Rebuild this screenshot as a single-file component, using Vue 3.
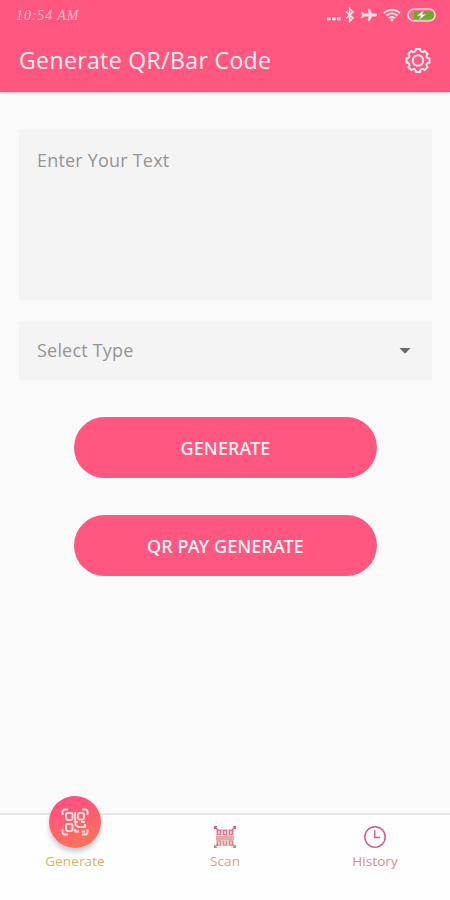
<script setup>
// Eight-toothed cog outline, centred on the origin
const point = (radius, degrees) => {
  const a = (degrees * Math.PI) / 180
  return `${(radius * Math.cos(a)).toFixed(2)} ${(radius * Math.sin(a)).toFixed(2)}`
}
const gearPath =
  Array.from({ length: 8 }, (_, i) => {
    const a = i * 45
    return `${i ? 'L' : 'M'}${point(11.7, a - 11)} L${point(11.7, a + 11)} Q${point(10, a + 12)} ${point(9.7, a + 17)} Q${point(9.2, a + 22.5)} ${point(9.7, a + 28)} Q${point(10, a + 33)} ${point(11.7, a + 34)}`
  }).join(' ') + 'Z'
</script>

<template>
  <main class="screen">
    <header class="header">
      <div class="status">
        <span class="time">10:54 AM</span>
        <div class="indicators">
          <svg width="15" height="20" viewBox="0 0 15 20" fill="#ffe3e9">
            <rect x="1" y="12.300" width="3.500" height="3" /><rect x="6" y="12.300" width="3.500" height="3" /><rect x="11" y="12.300" width="3.500" height="3" />
          </svg>
          <svg class="bluetooth" width="10" height="16" viewBox="0 0 10 16" fill="none" stroke="#ffe3e9" stroke-width="1.600">
            <path d="M1 4.500 8 11 4.700 14.300V1.700L8 5 1 11.500" />
          </svg>
          <svg class="plane" width="16" height="14" viewBox="0 0 16 14" fill="#ffe3e9" stroke="#ffe3e9" stroke-width=".4">
            <path d="M16 7c0-.8-.6-1.200-1.500-1.200H11L8.500 1H7l1 4.800H3L1.500 4H.5L1.200 7l-.7 3h1L3 8.200h5L7 13h1.500L11 8.200h3.500c.9 0 1.500-.4 1.500-1.200Z" />
          </svg>
          <svg class="wifi" width="18" height="14" viewBox="0 0 18 14" fill="none" stroke="#ffe3e9" stroke-width="1.900">
            <path d="M1 5.200C5.500.5 12.500.5 17 5.200M3.500 7.800C7 4.500 11 4.500 14.500 7.800M5.900 10.300C7.900 8.500 10.100 8.500 12.100 10.300" />
            <circle cx="9" cy="12" r="1.500" fill="#ffe3e9" stroke="none" />
          </svg>
          <svg class="battery" width="29" height="14" viewBox="0 0 29 14">
            <rect x="1" y="1" width="27" height="12" rx="6" fill="#f66f85" stroke="#ffd0d8" stroke-width="1.600" />
            <path d="M7 3h16a4 4 0 0 1 0 8H7Z" fill="#67ad29" />
            <path d="M16.500 2.500 10 7.700h4L12 12 19 6.300h-4Z" fill="#fff" stroke="#f7899a" stroke-width=".5" />
          </svg>
        </div>
      </div>
      <div class="bar">
        <h1>Generate QR/Bar Code</h1>
        <svg width="28" height="28" viewBox="-14 -13.500 28 28" fill="none" stroke="#ffedf1" stroke-width="1.900" stroke-linejoin="round">
          <path :d="gearPath" /><circle r="5.300" />
        </svg>
      </div>
    </header>

    <section class="form">
      <div class="field text-field">Enter Your Text</div>
      <div class="field select-field">
        <span>Select Type</span>
        <svg width="12" height="6" viewBox="0 0 12 6"><path d="M.5 0h11L6 5.700Z" fill="#696969" /></svg>
      </div>
      <button class="action">GENERATE</button>
      <button class="action pay">QR PAY GENERATE</button>
    </section>

    <nav class="nav">
      <div class="tab generate">
        <div class="bubble">
          <svg width="28" height="28" viewBox="0 0 28 28" fill="none" stroke="#ffe0df" stroke-width="1.900">
            <path d="M1.500 7V4q0-2.500 2.500-2.500h3M21 1.500h3q2.500 0 2.500 2.500v3M26.500 21v3q0 2.500-2.500 2.500h-3M7 26.500H4q-2.500 0-2.500-2.500v-3" />
            <rect x="5" y="5" width="6.500" height="7" rx="1.500" /><rect x="17" y="5" width="6" height="6.500" rx="1.500" /><rect x="5" y="16" width="6.500" height="7" rx="1.500" />
            <path d="M14.200 4v9.500M17 14h-2.500v3l3 2H24v-3M14.200 21v2.500H18M20.500 23.500H24M20 14h4" />
          </svg>
        </div>
        <span>Generate</span>
      </div>
      <div class="tab scan">
        <svg width="24" height="24" viewBox="0 0 24 24" fill="none">
          <defs><linearGradient id="scan-tint" x1="0" y1="0" x2="0" y2="24" gradientUnits="userSpaceOnUse"><stop stop-color="#d45c87" /><stop offset="1" stop-color="#dc8064" /></linearGradient></defs>
          <rect x="3" y="4" width="18" height="17" fill="url(#scan-tint)" opacity=".35" />
          <g stroke="url(#scan-tint)" stroke-width="1.200">
            <path d="M1.500 4V1.500H4M20 1.500h2.500V4M22.500 20v2.500H20M4 22.500H1.500V20M2 2l3 3M22 2l-3 3M2 22l3-3M22 22l-3-3" />
            <path d="M4.500 5.500h3v4h-3zM16.500 5.500h3v4h-3zM4.500 16h3v4h-3zM10.500 5.500h3v4h-3zM3 12h18M3 14h18M10.500 16v4h3v-4M16.500 16h3v4h-3z" opacity=".8" />
          </g>
        </svg>
        <span>Scan</span>
      </div>
      <div class="tab history">
        <svg width="24" height="24" viewBox="0 0 24 24" fill="none" stroke="#d45d81" stroke-width="1.500">
          <circle cx="12" cy="12" r="10.200" /><path d="M11.700 5.300V12.500H17" />
        </svg>
        <span>History</span>
      </div>
    </nav>
  </main>
</template>

<style>
body { margin: 0; }
</style>

<style scoped>
.screen { box-sizing: border-box; width: 450px; height: 900px; display: flex; flex-direction: column; overflow: hidden; background: #fafafa; font-family: "Open Sans", "Noto Sans", sans-serif; }
.header { box-sizing: border-box; height: 92px; flex: none; background: #ff577f; border-bottom: 1px solid #ee577b; box-shadow: 0 1px 2px #f3b9c7; }
.status { height: 30px; padding: 0 14px 0 16px; display: flex; align-items: center; justify-content: space-between; }
.time { font: italic 14px "Liberation Serif", serif; color: #ffb9c7; letter-spacing: .9px; line-height: 29px; }
.indicators { height: 28px; display: flex; align-items: center; }
.bluetooth { margin-left: 4px; }
.plane { margin-left: 6px; }
.wifi { margin-left: 6px; }
.battery { margin-left: 6px; }
.bar { height: 61px; padding: 0 18px 0 19px; display: flex; align-items: center; justify-content: space-between; }
h1 { margin: -1px 0 0; font-size: 23px; font-weight: 400; line-height: 32px; letter-spacing: .38px; color: #fff0f3; white-space: nowrap; }
.form { flex: 1; padding: 37px 18px 0 19px; display: flex; flex-direction: column; align-items: center; }
.field { box-sizing: border-box; width: 100%; padding: 0 18px; background: #f4f4f4; color: #949494; font-size: 18px; letter-spacing: .2px; }
.text-field { height: 171px; padding-top: 19px; line-height: 24px; }
.select-field { height: 59px; margin-top: 21px; padding-right: 21px; display: flex; align-items: center; justify-content: space-between; line-height: 24px; }
.select-field > span { margin-top: -1px; }
.action { width: 303px; height: 61px; margin: 37px 0 0; padding: 0; border: 0; border-radius: 31px; background: #ff577f; color: #fff3f5; font: 500 18px "Noto Sans", "Open Sans", sans-serif; letter-spacing: .1px; }
.nav { box-sizing: border-box; height: 87px; flex: none; border-top: 2px solid #e6e6e6; background: #fefefe; display: grid; grid-template-columns: repeat(3, 1fr); }
.tab { display: flex; flex-direction: column; align-items: center; padding-top: 10px; font-size: 13.500px; line-height: 18px; letter-spacing: .1px; }
.tab > span { margin-top: 3px; }
.generate { padding-top: 0; color: #dfb062; }
.bubble { width: 52px; height: 52px; margin-top: -19px; border-radius: 50%; background: linear-gradient(165deg, #ff4f83 10%, #ff7359 90%); display: flex; align-items: center; justify-content: center; box-shadow: 0 4px 5px #c5ccd2; }
.generate > span { margin-top: 4px; }
.scan { color: #dfa17f; }
.history { color: #d98d82; }
</style>
